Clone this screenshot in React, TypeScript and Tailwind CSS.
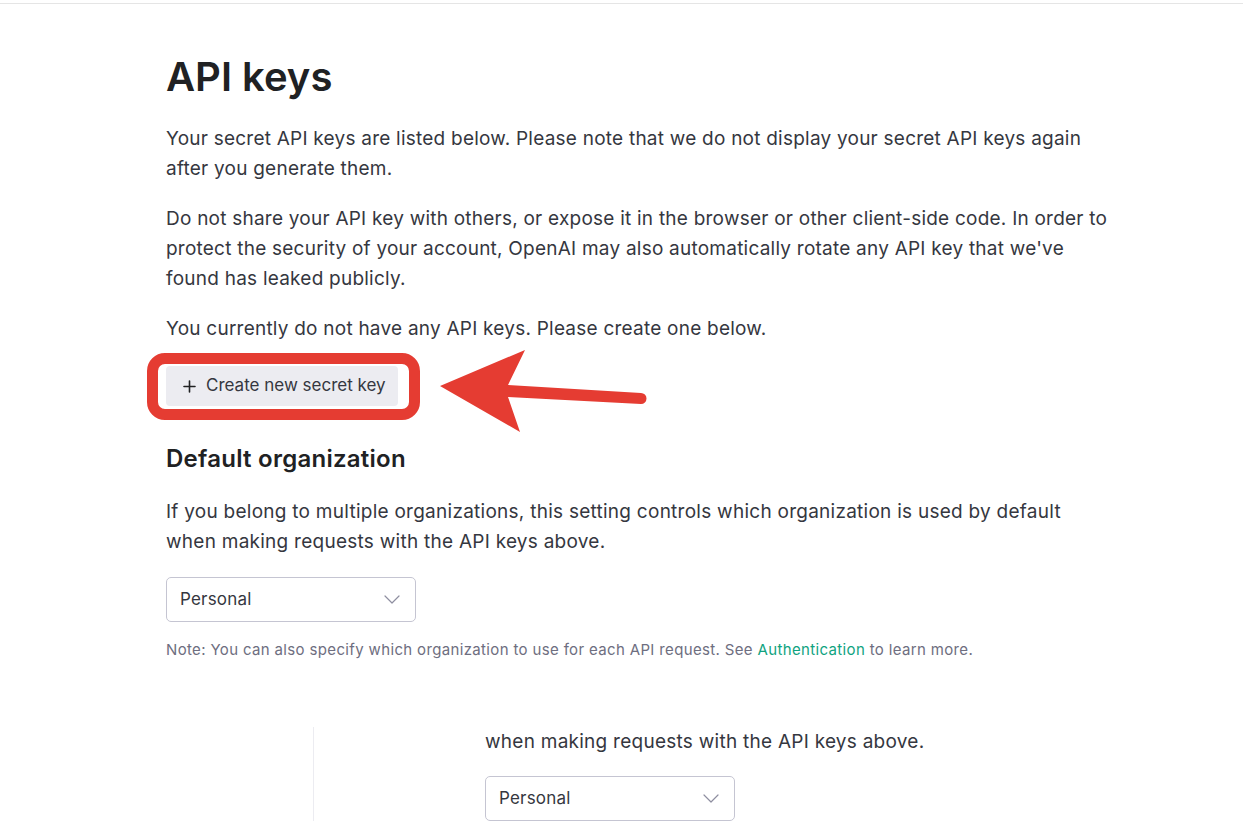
import React from "react";

function Chevron() {
  return (
    <svg width="16" height="9" viewBox="0 0 16 9" fill="none">
      <path d="M1 1l7 7 7-7" stroke="#8e8ea0" strokeWidth="1.2" strokeLinecap="round" strokeLinejoin="round" />
    </svg>
  );
}

function Select() {
  return (
    <div className="flex h-[45px] w-[250px] items-center justify-between rounded-[5px] border border-[#c5c5d2] pl-[13px] pr-[15px] text-[17px] tracking-[0.2px] text-[#353740]">
      <span>Personal</span>
      <Chevron />
    </div>
  );
}

export default function App() {
  return (
    <div
      className="relative min-h-screen overflow-hidden bg-white text-[#353740]"
      style={{ fontFamily: "Inter, 'Noto Sans', sans-serif" }}
    >
      <div className="mt-[3px] border-t border-[#e5e5e5]" />
      <div className="pl-[166px] pt-[49px]">
        <h1 className="text-[40px] font-semibold leading-[48px] text-[#202123]">API keys</h1>
        <div className="mt-[23px] flex flex-col gap-[20px] whitespace-nowrap text-[19px] leading-[30px] tracking-[0.23px]">
          <p>
            Your secret API keys are listed below. Please note that we do not display your secret API keys again
            <br />
            after you generate them.
          </p>
          <p>
            Do not share your API key with others, or expose it in the browser or other client-side code. In order to
            <br />
            protect the security of your account, OpenAI may also automatically rotate any API key that we've
            <br />
            found has leaked publicly.
          </p>
          <p>You currently do not have any API keys. Please create one below.</p>
        </div>
        <div className="relative mt-[22px] w-fit">
          <button className="flex h-[40px] w-[232px] items-center gap-[10px] rounded-[4px] bg-[#ececf1] pl-[17px] text-[17px] text-[#353740]">
            <svg width="13" height="13" viewBox="0 0 13 13" fill="none">
              <path d="M6.5 1v11M1 6.5h11" stroke="#202123" strokeWidth="1.6" strokeLinecap="round" />
            </svg>
            <span>Create new secret key</span>
          </button>
          <div className="pointer-events-none absolute left-[-19px] top-[-13px] h-[67px] w-[273px] rounded-[18px] border-[11px] border-[#e53c32]" />
        </div>
        <h2 className="mt-[38px] text-[24px] font-semibold leading-[30px] tracking-[0.25px] text-[#202123]">Default organization</h2>
        <p className="mt-[23px] whitespace-nowrap text-[19px] leading-[30px] tracking-[0.26px]">
          If you belong to multiple organizations, this setting controls which organization is used by default
          <br />
          when making requests with the API keys above.
        </p>
        <div className="mt-[20px]">
          <Select />
        </div>
        <p className="mt-[16px] whitespace-nowrap text-[15px] leading-[24px] tracking-[0.35px] text-[#6e6e80]">
          Note: You can also specify which organization to use for each API request. See{" "}
          <span className="text-[#10a37f]">Authentication</span> to learn more.
        </p>
      </div>
      <div className="mt-[65px] flex">
        <div className="w-[313px] shrink-0" />
        <div className="border-l border-[#ececf1] pl-[171px]">
          <p className="text-[19px] leading-[30px] tracking-[0.26px]">when making requests with the API keys above.</p>
          <div className="mt-[19px]">
            <Select />
          </div>
        </div>
      </div>
      <svg className="pointer-events-none absolute left-0 top-0" width="1243" height="823" viewBox="0 0 1243 823">
        <path
          d="M440 386 L525 350 L508 385 L641 393 A5.5 5.5 0 0 1 641 404 L508 397 L520 432 Z"
          fill="#e53c32"
        />
      </svg>
    </div>
  );
}
